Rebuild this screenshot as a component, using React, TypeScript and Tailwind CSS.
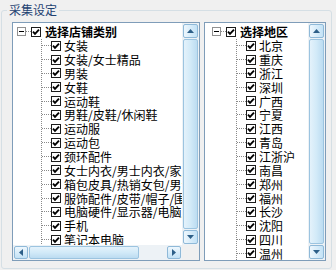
import React from "react";

const categories = [
  "女装",
  "女装/女士精品",
  "男装",
  "女鞋",
  "运动鞋",
  "男鞋/皮鞋/休闲鞋",
  "运动服",
  "运动包",
  "颈环配件",
  "女士内衣/男士内衣/家居服",
  "箱包皮具/热销女包/男包",
  "服饰配件/皮带/帽子/围巾",
  "电脑硬件/显示器/电脑周边",
  "手机",
  "笔记本电脑",
  "数码相机",
];

const regions = [
  "北京", "重庆", "浙江", "深圳", "广西", "宁夏", "江西", "青岛", "江浙沪",
  "南昌", "郑州", "福州", "长沙", "沈阳", "四川", "温州", "杭州",
];

const Check = () => (
  <span className="w-[10px] h-[10px] shrink-0 border border-[#1c1c1c] bg-white flex items-center justify-center">
    <svg width="8" height="8" viewBox="0 0 8 8">
      <path d="M1 3.6 L3 5.8 L7 1.6" stroke="#000" strokeWidth="1.9" fill="none" />
    </svg>
  </span>
);

const Expander = () => (
  <span className="w-[9px] h-[9px] shrink-0 border border-[#919191] bg-white flex items-center justify-center">
    <span className="w-[5px] h-[1px] bg-black" />
  </span>
);

const ArrowBtn = ({ dir }: { dir: "up" | "down" | "left" | "right" }) => {
  const pts = {
    up: "0,4 3.5,0 7,4",
    down: "0,0 3.5,4 7,0",
    left: "4,0 0,3.5 4,7",
    right: "0,0 4,3.5 0,7",
  }[dir];
  const vertical = dir === "up" || dir === "down";
  return (
    <div
      className={
        vertical
          ? "h-[14px] shrink-0 rounded-[2px] border border-[#8fb9d8] bg-gradient-to-r from-[#eef7fd] to-[#c3e2f6] flex items-center justify-center"
          : "w-[14px] shrink-0 rounded-[2px] border border-[#8fb9d8] bg-gradient-to-b from-[#eef7fd] to-[#c3e2f6] flex items-center justify-center"
      }
    >
      <svg width={vertical ? 7 : 4} height={vertical ? 4 : 7}>
        <polygon points={pts} fill="#2d5f88" />
      </svg>
    </div>
  );
};

const VScroll = () => (
  <div className="w-[17px] shrink-0 bg-[#edf2f6] p-[1px] flex flex-col">
    <ArrowBtn dir="up" />
    <div className="flex-1 my-[1px] rounded-[2px] border border-[#9cc4e0] bg-gradient-to-r from-[#e4f2fb] via-[#d2eaf8] to-[#bcdcf1]" />
    <ArrowBtn dir="down" />
  </div>
);

// one root node with a column of checked children
const Tree = ({ title, items, indent }: { title: string; items: string[]; indent: string }) => (
  <div className={`flex-1 min-w-0 overflow-hidden bg-white pt-[2px] ${indent}`}>
    <div className="flex items-center h-[13.85px] whitespace-nowrap">
      <Expander />
      <span className="w-[5px] border-t border-dotted border-[#8a8a8a]" />
      <Check />
      <span className="ml-[4px] font-bold leading-[13px]">{title}</span>
    </div>
    <div className="ml-[24px] border-l border-dotted border-[#8a8a8a]">
      {items.map((it) => (
        <div key={it} className="flex items-center h-[13.85px] whitespace-nowrap">
          <span className="w-[9px] shrink-0 border-t border-dotted border-[#8a8a8a]" />
          <Check />
          <span className="ml-[3px] leading-[13px]">{it}</span>
        </div>
      ))}
    </div>
  </div>
);

export default function App() {
  return (
    <div className="w-[336px] h-[270px] bg-[#f0f0f0] overflow-hidden text-[12px] leading-[14px] text-black [font-family:'Noto_Sans_CJK_SC',sans-serif]">
      <fieldset className="ml-[1px] mt-[3px] w-[331px] h-[266px] border border-[#d5dfe5] rounded-[3px]">
        <legend className="ml-[5px] px-[2px] text-[12px] leading-[14px] text-[#1f4272]">采集设定</legend>
        <div className="flex gap-[4px] pl-[10px] pt-[5px]">
          <div className="w-[188px] h-[239px] border border-[#7f9db9] bg-white flex flex-col">
            <div className="flex flex-1 min-h-0">
              <Tree title="选择店铺类别" items={categories} indent="pl-[4px]" />
              <VScroll />
            </div>
            <div className="h-[15px] shrink-0 flex">
              <div className="flex-1 bg-[#edf2f6] p-[1px] flex">
                <ArrowBtn dir="left" />
                <div className="w-[110px] mx-[1px] rounded-[2px] border border-[#9cc4e0] bg-gradient-to-b from-[#e4f2fb] via-[#d2eaf8] to-[#bcdcf1]" />
                <div className="flex-1" />
                <ArrowBtn dir="right" />
              </div>
              <div className="w-[17px] bg-[#f0f0f0]" />
            </div>
          </div>
          <div className="w-[122px] h-[239px] border border-[#7f9db9] bg-white flex">
            <Tree title="选择地区" items={regions} indent="pl-[7px]" />
            <VScroll />
          </div>
        </div>
      </fieldset>
    </div>
  );
}
